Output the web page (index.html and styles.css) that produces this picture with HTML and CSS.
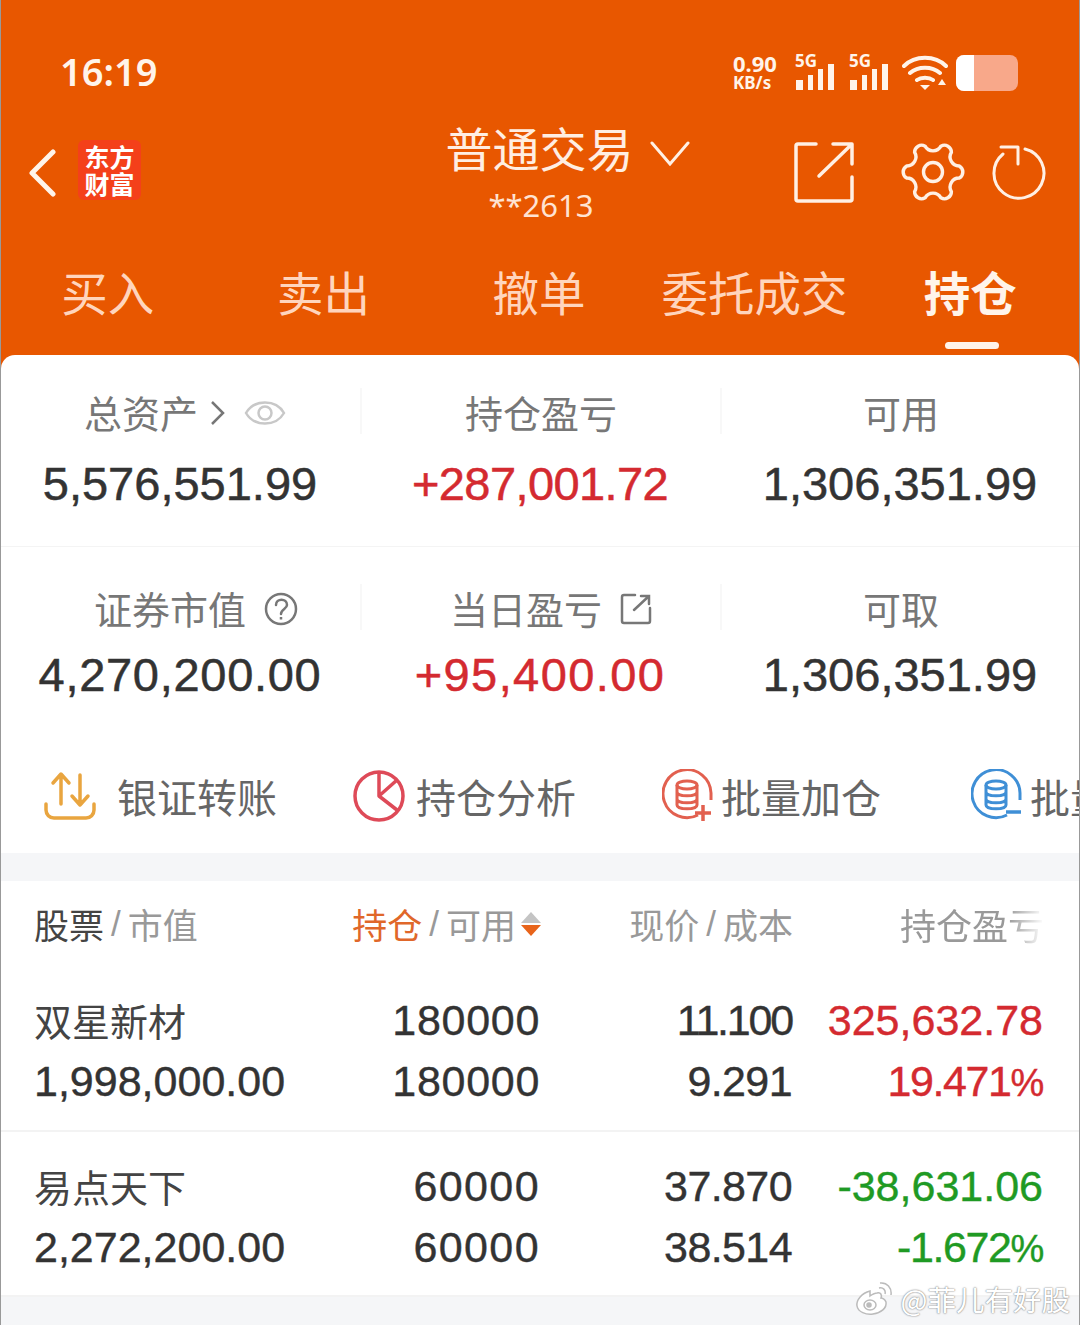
FILE: index.html
```html
<!DOCTYPE html>
<html>
  <head>
    <title>持仓</title>
    <link rel="stylesheet" href="styles.css">
  </head>
  <body>
    <div class="page">
      <div class="header">
        <div class="status">
          <span class="time">16:19</span>
          <div class="status-right">
            <div class="speed"><b>0.90</b><b class="unit">KB/s</b></div>
            <div class="net">
              <span class="net-label">5G</span>
              <svg width="42" height="38" viewBox="0 0 42 38"><path d="M2 26h7v10H2zM14 21h5v15h-5zM24 15h5v21h-5zM34 10h6v26h-6z" fill="#fff4ea"/></svg>
            </div>
            <div class="net">
              <span class="net-label">5G</span>
              <svg width="42" height="38" viewBox="0 0 42 38"><path d="M2 26h7v10H2zM14 21h5v15h-5zM24 15h5v21h-5zM34 10h6v26h-6z" fill="#fff4ea"/></svg>
            </div>
            <svg class="wifi" width="46" height="38" viewBox="0 0 46 38" fill="none" stroke="#fff4ea" stroke-width="4" stroke-linecap="round"><path d="M2 12C13 1 33 1 44 12M8 19c8-7 22-7 30 0M15 26c4-3 12-3 16 0"/><path d="M18 31h10l-5 5z" fill="#fff4ea" stroke="none"/><path d="M36 31h8l-4-6z" fill="#fff4ea" stroke="none"/></svg>
            <div class="battery"><div class="battery-level"></div></div>
          </div>
        </div>
        <div class="titlebar">
          <div class="title-left">
            <svg width="30" height="48" viewBox="0 0 30 48" fill="none" stroke="#fff4ea" stroke-width="5" stroke-linecap="round" stroke-linejoin="round"><path d="M25 3L4 24l21 21"/></svg>
            <div class="logo">东方<br>财富</div>
          </div>
          <div class="title-center">
            <div class="title-main">普通交易
              <svg class="chevron" width="40" height="26" viewBox="0 0 40 26" fill="none" stroke="#fff0e4" stroke-width="3" stroke-linecap="round"><path d="M2 3l18 21L38 3"/></svg>
            </div>
            <div class="title-sub">**2613</div>
          </div>
          <div class="title-right">
            <svg width="62" height="62" viewBox="0 0 62 62" fill="none" stroke="#fff0e4" stroke-width="3.5" stroke-linecap="round" stroke-linejoin="round"><path d="M23 3H5a2 2 0 0 0-2 2v53a2 2 0 0 0 2 2h52a2 2 0 0 0 2-2V36"/><path d="M26 35L58 4M40 3h19v20"/></svg>
            <svg class="icon-gear" width="64" height="64" viewBox="-2 -2 64 64" fill="none" stroke="#fff0e4" stroke-width="3.4" stroke-linejoin="round"><path d="M56.31 23.93A7 7 0 0 1 56.31 36.07A9 9 0 0 0 48.41 49.75A7 7 0 0 1 37.89 55.82A9 9 0 0 0 22.11 55.82A7 7 0 0 1 11.59 49.75A9 9 0 0 0 3.69 36.07A7 7 0 0 1 3.69 23.93A9 9 0 0 0 11.59 10.25A7 7 0 0 1 22.11 4.18A9 9 0 0 0 37.89 4.18A7 7 0 0 1 48.41 10.25A9 9 0 0 0 56.31 23.93Z"/><circle cx="30" cy="30" r="9.5"/></svg>
            <svg class="icon-refresh" width="56" height="58" viewBox="0 0 56 58" fill="none" stroke="#fff0e4" stroke-width="3" stroke-linecap="round" stroke-linejoin="round"><path d="M33 6A25 25 0 1 1 11 11"/><path d="M9 4h17v17"/></svg>
          </div>
        </div>
        <div class="tabs">
          <div class="tab">买入</div>
          <div class="tab">卖出</div>
          <div class="tab">撤单</div>
          <div class="tab">委托成交</div>
          <div class="tab tab-on">持仓</div>
        </div>
      </div>

      <div class="card">
        <div class="summary">
          <div class="cell">
            <div class="label label-assets">总资产
              <svg width="16" height="26" viewBox="0 0 16 26" fill="none" stroke="#777" stroke-width="2.5"><path d="M2 2l11 11L2 24"/></svg>
              <svg class="label-gap" width="42" height="30" viewBox="0 0 42 30" fill="none" stroke="#c8c8c8" stroke-width="2.5"><path d="M2 15C10 1 32 1 40 15C32 29 10 29 2 15Z"/><circle cx="21" cy="15" r="6.5"/></svg>
            </div>
            <div class="value">5,576,551.99</div>
          </div>
          <div class="cell">
            <div class="label label-line">持仓盈亏</div>
            <div class="value red sp-tight">+287,001.72</div>
          </div>
          <div class="cell">
            <div class="label label-line">可用</div>
            <div class="value">1,306,351.99</div>
          </div>
        </div>
        <div class="summary summary-two">
          <div class="cell">
            <div class="label label-market">证券市值
              <svg class="label-gap" width="34" height="34" viewBox="0 0 34 34" fill="none" stroke="#777" stroke-width="2.5"><circle cx="17" cy="17" r="15"/><path d="M12 13c0-7 11-7 11 0 0 4-6 4-6 9" stroke-linecap="round"/><path d="M17 25v2.5"/></svg>
            </div>
            <div class="value sp-wide">4,270,200.00</div>
          </div>
          <div class="cell">
            <div class="label label-line label-today">当日盈亏
              <svg class="label-gap" width="32" height="32" viewBox="0 0 32 32" fill="none" stroke="#777" stroke-width="2.5" stroke-linecap="round"><path d="M15 2H4a2 2 0 0 0-2 2v24a2 2 0 0 0 2 2h24a2 2 0 0 0 2-2V15"/><path d="M14 17L29 3M21 3h8v8"/></svg>
            </div>
            <div class="value red sp-wider">+95,400.00</div>
          </div>
          <div class="cell">
            <div class="label label-line">可取</div>
            <div class="value">1,306,351.99</div>
          </div>
        </div>

        <div class="tools">
          <div class="tool tool-first">
            <svg width="52" height="52" viewBox="0 0 52 52" fill="none" stroke="#e9a53f" stroke-width="3.5" stroke-linecap="round" stroke-linejoin="round"><path d="M2 34v6a8 8 0 0 0 8 8h32a8 8 0 0 0 8-8v-6"/><path d="M17 34V5M9 13l8-9 8 9M36 5v29M28 26l8 9 8-9"/></svg>
            <span>银证转账</span>
          </div>
          <div class="tool">
            <svg width="52" height="52" viewBox="0 0 52 52" fill="none" stroke="#de4a58" stroke-width="3.5" stroke-linejoin="round"><circle cx="26" cy="26" r="24"/><path d="M26 2v24l18 14M26 26L44 10"/></svg>
            <span>持仓分析</span>
          </div>
          <div class="tool tool-db">
            <svg width="52" height="54" viewBox="0 0 52 54" fill="none" stroke="#e2604f" stroke-width="3"><path d="M36 46A24 24 0 1 1 49 24v7"/><ellipse cx="25" cy="16" rx="10" ry="4"/><path d="M15 16v20c0 5 20 5 20 0V16M15 23c0 5 20 5 20 0M15 30c0 5 20 5 20 0"/><path d="M41 36v16M33 44h16" stroke-width="3.5"/></svg>
            <span>批量加仓</span>
          </div>
          <div class="tool tool-db">
            <svg width="52" height="54" viewBox="0 0 52 54" fill="none" stroke="#3f8fd6" stroke-width="3"><path d="M36 46A24 24 0 1 1 49 24v7"/><ellipse cx="25" cy="16" rx="10" ry="4"/><path d="M15 16v20c0 5 20 5 20 0V16M15 23c0 5 20 5 20 0M15 30c0 5 20 5 20 0"/><path d="M35 43h15" stroke-width="3.5"/></svg>
            <span>批量减仓</span>
          </div>
        </div>

        <div class="band"></div>

        <div class="table-head">
          <div class="th"><span class="dark">股票</span><i>/</i>市值</div>
          <div class="th th-right"><span class="orange">持仓</span><i>/</i>可用<span class="sort"><span class="sort-up"></span><span class="sort-down"></span></span></div>
          <div class="th th-right">现价<i>/</i>成本</div>
          <div class="th th-right th-fade">持仓盈亏</div>
        </div>

        <div class="stock">
          <div>
            <div class="stock-name">双星新材</div>
            <div class="num">1,998,000.00</div>
          </div>
          <div class="right">
            <div class="num sp-wide">180000</div>
            <div class="num sp-wide">180000</div>
          </div>
          <div class="right">
            <div class="num sp-tightest">11.100</div>
            <div class="num sp-tight">9.291</div>
          </div>
          <div class="right red">
            <div class="num">325,632.78</div>
            <div class="num sp-tighter">19.471<span class="pct">%</span></div>
          </div>
        </div>
        <div class="stock stock-last">
          <div>
            <div class="stock-name">易点天下</div>
            <div class="num">2,272,200.00</div>
          </div>
          <div class="right">
            <div class="num sp-wider">60000</div>
            <div class="num sp-wider">60000</div>
          </div>
          <div class="right">
            <div class="num sp-tight">37.870</div>
            <div class="num sp-tight">38.514</div>
          </div>
          <div class="right green">
            <div class="num">-38,631.06</div>
            <div class="num sp-tighter">-1.672<span class="pct">%</span></div>
          </div>
        </div>
        <div class="foot"></div>
      </div>

      <div class="watermark">
        <svg width="38" height="34" viewBox="0 0 38 34" fill="#fff" stroke="#bbb" stroke-width="1.5"><path d="M15 9C7 11 1 18 2 24c1 6 9 9 16 8 8-1 14-6 13-12-1-3-4-4-5-4 1-3 0-6-4-5-2 0-4 1-7 3z"/><ellipse cx="15" cy="23" rx="6" ry="5" fill="none"/><circle cx="14" cy="23" r="2" fill="#bbb"/><path d="M24 6c4-1 7 2 6 6M25 1c7-1 12 5 11 12" fill="none"/></svg>
        <span>@菲儿有好股</span>
      </div>
    </div>
  </body>
</html>
```

FILE: styles.css
```css
* {
  box-sizing: border-box;
}
html, body {
  margin: 0;
  padding: 0;
}
body {
  width: 1080px;
  height: 1325px;
  overflow: hidden;
  font-family: "Noto Sans CJK SC", "Noto Sans", sans-serif;
  color: #666;
}
.page {
  position: relative;
  width: 1080px;
  height: 1325px;
  overflow: hidden;
  background-color: #e85700;
  border-left: 1px solid #999;
  border-right: 1px solid #999;
}

/* orange header */
.header {
  height: 355px;
  color: #ffe9dc;
}
.status {
  height: 110px;
  display: flex;
  align-items: center;
  justify-content: space-between;
  padding: 32px 61px 0 59px;
}
.time {
  font-family: "Noto Sans", sans-serif;
  font-size: 38px;
  font-weight: 600;
  color: #fff4ea;
}
.status-right {
  display: flex;
  align-items: flex-end;
  height: 42px;
}
.speed {
  width: 61px;
  font-family: "Noto Sans", sans-serif;
  line-height: 19px;
  color: #fff4ea;
  font-size: 22px;
}
.speed b {
  display: block;
}
.speed .unit {
  font-size: 17px;
}
.net {
  position: relative;
  width: 54px;
  height: 38px;
}
.net svg {
  display: block;
}
.net-label {
  position: absolute;
  left: 1px;
  top: -5px;
  font-family: "Noto Sans", sans-serif;
  font-size: 17px;
  font-weight: 700;
  color: #fff4ea;
}
.wifi {
  margin: 0 8px 0 0;
}
.battery {
  width: 62px;
  height: 36px;
  margin-bottom: 1px;
  border-radius: 8px;
  background-color: #f8a88a;
  overflow: hidden;
}
.battery-level {
  width: 18px;
  height: 36px;
  background-color: #fff;
}
.titlebar {
  height: 125px;
  display: grid;
  grid-template-columns: 360px 360px 360px;
  align-items: center;
}
.title-left {
  display: flex;
  align-items: center;
  gap: 20px;
  padding: 0 0 0 27px;
}
.logo {
  width: 63px;
  height: 60px;
  margin-top: -5px;
  border-radius: 6px;
  background-color: #f4401a;
  color: #fff;
  font-size: 25px;
  line-height: 27px;
  font-weight: 700;
  text-align: center;
  padding-top: 3px;
}
.title-center {
  text-align: center;
  margin-top: -5px;
}
.title-main {
  display: flex;
  justify-content: center;
  align-items: center;
  height: 66px;
  padding-right: 3px;
  font-size: 47px;
  color: #ffeee2;
  white-space: nowrap;
}
.chevron {
  margin: 14px -56px 0 16px;
}
.title-sub {
  font-family: "Noto Sans", sans-serif;
  font-size: 31px;
  line-height: 44px;
  margin-top: 4px;
  color: #ffe3d2;
}
.title-right {
  display: flex;
  align-items: center;
  padding-left: 72px;
  margin-top: -2px;
}
.icon-gear {
  margin-left: 46px;
}
.icon-refresh {
  margin-left: 27px;
}
.tabs {
  height: 120px;
  display: grid;
  grid-template-columns: repeat(5, 1fr);
}
.tab {
  height: 120px;
  padding-top: 23px;
  text-align: center;
  font-size: 46.5px;
  line-height: 66px;
  color: #ffd5bd;
  margin-left: -2px;
}
.tab-on {
  font-weight: 700;
  color: #fff4ea;
  position: relative;
}
.tab-on::after {
  content: "";
  position: absolute;
  left: 84px;
  bottom: 6px;
  width: 54px;
  height: 7px;
  border-radius: 4px;
  background-color: #fff4ea;
}

/* white card */
.card {
  height: 970px;
  border-radius: 14px 14px 0 0;
  background-color: #fff;
  overflow: hidden;
}
.summary {
  height: 192px;
  padding-top: 33px;
  display: grid;
  grid-template-columns: 360px 360px 360px;
  align-content: start;
  border-bottom: 1px solid #f4f4f4;
  margin-left: -1px;
}
.summary-two {
  height: 193px;
  padding-top: 37px;
  border-bottom: 0;
}
.cell {
  text-align: center;
}
.label {
  height: 46px;
  display: flex;
  justify-content: center;
  align-items: center;
  gap: 12px;
  font-size: 38px;
  color: #777;
  white-space: nowrap;
}
.label svg {
  margin-top: 4px;
}
.label-line {
  border-left: 2px solid #f8f8f8;
}
.label-gap {
  margin-left: 6px;
}
.label-assets {
  padding-left: 10px;
}
.label-market {
  padding-left: 32px;
}
.label-today {
  padding-left: 20px;
}
.value {
  font-family: "Liberation Sans", Arial, sans-serif;
  font-size: 47px;
  line-height: 60px;
  margin-top: 20px;
  color: #333;
  -webkit-text-stroke: 0.5px currentColor;
}
.summary-two .value {
  margin-top: 15px;
}
.summary .red {
  color: #d42a30;
}
.tools {
  height: 113px;
  display: flex;
  overflow: hidden;
  padding: 1px 0 0 43px;
  font-size: 40px;
  color: #666;
}
.tool {
  flex: none;
  width: 309px;
  height: 110px;
  display: flex;
  align-items: center;
  gap: 11px;
  white-space: nowrap;
}
.tool svg {
  flex: none;
}
.tool-first {
  gap: 21px;
}
.tool-db {
  gap: 7px;
}
.band {
  height: 28px;
  background-color: #f5f6f8;
}

/* table */
.table-head {
  height: 91px;
  display: grid;
  grid-template-columns: 257px 250px 252px 251px;
  padding: 0 0 6px 33px;
  font-size: 35px;
  color: #999;
  align-items: center;
}
.th {
  display: flex;
  align-items: center;
  white-space: nowrap;
}
.th i {
  font-style: normal;
  margin: 0 7px;
  font-family: "Liberation Sans", sans-serif;
}
.th-right {
  justify-content: flex-end;
}
.th-fade {
  -webkit-mask-image: linear-gradient(to right, #000 75%, transparent 100%);
  mask-image: linear-gradient(to right, #000 75%, transparent 100%);
  margin-left: 106px;
  font-size: 36px;
}
.dark {
  color: #444;
}
.orange {
  color: #e0672a;
}
.sort {
  display: flex;
  flex-direction: column;
  gap: 2px;
  margin-left: 5px;
}
.sort-up {
  border-left: 10px solid transparent;
  border-right: 10px solid transparent;
  border-bottom: 11px solid #c4c4c4;
}
.sort-down {
  border-left: 10px solid transparent;
  border-right: 10px solid transparent;
  border-top: 11px solid #e8641a;
}
.stock {
  height: 160px;
  display: grid;
  grid-template-columns: 256px 250px 252px 251px;
  padding: 18px 0 0 33px;
  border-bottom: 2px solid #f3f3f3;
  color: #333;
}
.stock-last {
  height: 165px;
  padding-top: 24px;
}
.stock-name {
  font-size: 38px;
  line-height: 61px;
  margin: -1px 0 1px;
  color: #444;
}
.num {
  font-family: "Liberation Sans", Arial, sans-serif;
  font-size: 43px;
  line-height: 61px;
  -webkit-text-stroke: 0.4px currentColor;
  white-space: nowrap;
}
.pct {
  font-size: 38px;
}
.right {
  text-align: right;
}
.red {
  color: #d42a30;
}
.green {
  color: #1f9a24;
}
.sp-wide {
  letter-spacing: 0.7px;
}
.sp-wider {
  letter-spacing: 1.4px;
}
.sp-tight {
  letter-spacing: -0.6px;
}
.sp-tighter {
  letter-spacing: -1.4px;
}
.sp-tightest {
  letter-spacing: -2.2px;
}
.foot {
  height: 40px;
  background-color: #f5f6f8;
}

/* sits over the page corner */
.watermark {
  position: absolute;
  right: 9px;
  top: 1278px;
  display: flex;
  align-items: center;
  gap: 8px;
  font-size: 28.5px;
  color: #fff;
  text-shadow: 0 0 2px #888, 0 0 1px #888;
}
```
